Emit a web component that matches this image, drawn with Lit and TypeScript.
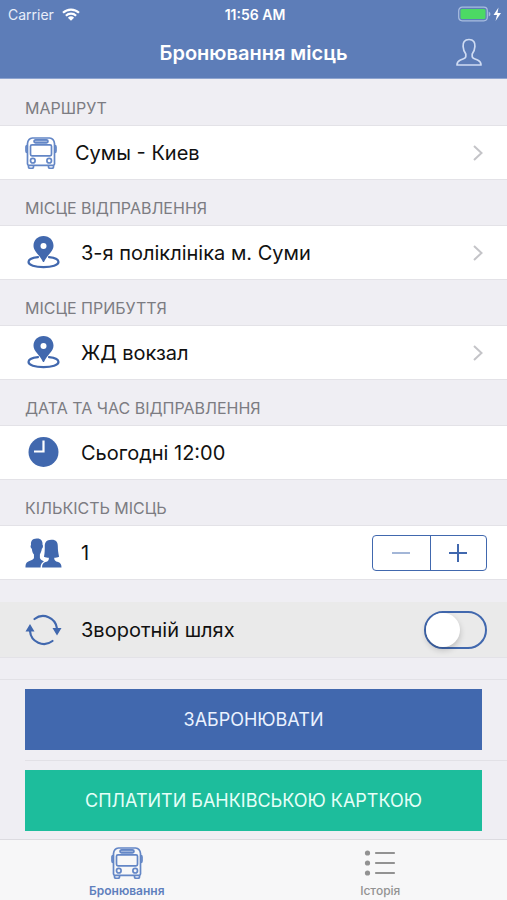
import { LitElement, html, css, svg, nothing } from "lit";
import { customElement, state } from "lit/decorators.js";

const busIcon = svg`
  <svg class="icon bus" viewBox="0 0 32 32" aria-hidden="true" fill="none" stroke="currentColor" stroke-width="1.700">
    <path d="M2.500 27V6.500Q3 1.500 7.500 1H24.500Q29 1.500 29.500 6.500V27Q29.500 28.300 28 28.300H4Q2.500 28.300 2.500 27Z" />
    <rect x="9" y="2.800" width="14" height="3" rx="1.500" fill="currentColor" fill-opacity="0.600" />
    <rect x="5.500" y="7.800" width="21" height="11" rx="1.500" />
    <path d="M2.500 8.500H2Q1 8.500 1 10V14Q1 15.500 2 15.500H2.500M29.500 8.500H30Q31 8.500 31 10V14Q31 15.500 30 15.500H29.500" fill="currentColor" fill-opacity="0.600" />
    <circle cx="7.800" cy="23.700" r="2.300" />
    <circle cx="24.200" cy="23.700" r="2.300" />
    <path d="M3.500 28.500V30Q3.500 31.300 5 31.300H7Q8.500 31.300 8.500 30V28.500M23.500 28.500V30Q23.500 31.300 25 31.300H27Q28.500 31.300 28.500 30V28.500" />
  </svg>`;

const pinIcon = svg`
  <svg class="icon" viewBox="0 0 36 36" aria-hidden="true">
    <path d="M18 1C12 1 8 5.300 8 10.800C8 16.500 14.500 20 17.500 27H18.500C21.500 20 28 16.500 28 10.800C28 5.300 24 1 18 1Z" fill="currentColor" />
    <circle cx="18" cy="11" r="3" fill="#fff" />
    <path d="M12.500 22.200C6.500 22.900 3 24.800 3 27.100C3 30 9.500 32.100 18 32.100S33 30 33 27.100C33 24.800 29.500 22.900 23.500 22.200" fill="none" stroke="currentColor" stroke-width="2.200" stroke-linecap="round" />
  </svg>`;

const clockIcon = svg`
  <svg class="icon" viewBox="0 0 36 36" aria-hidden="true">
    <circle cx="18" cy="17" r="15" fill="currentColor" />
    <path d="M18 5.500V16.500H8.500" fill="none" stroke="#fff" stroke-width="2.200" />
  </svg>`;

const peopleIcon = svg`
  <svg class="icon wide" viewBox="0 0 38 32" aria-hidden="true" fill="currentColor">
    <path d="M27 2.500C32 2.300 33.700 5 33.700 9C33.700 13 34.200 16 35 19.800C33.500 20.600 31.500 20.800 30 20.800C30 23.500 31 24.300 34 25.300C36.500 26.200 37.500 28 37.500 31H17.500C17.500 28 18.500 26.200 21 25.300C24 24.300 24.500 23.500 24.500 20.800C23 20.800 21 20.600 19.500 19.800C20.300 16 20.300 13 20.300 9C20.300 5 22 2.700 27 2.500Z" />
    <path d="M12 1C16.500 .8 18.300 3.500 18 7.500C18.900 8 18.500 11 17.300 11.700C17 14.500 16 16 15.300 17.500V21C15.500 22.800 17 23.300 19.500 24.500C17.200 26 16 28 16 31H.5C.5 27 1.500 25.200 4.500 24.200C7.500 23.200 9 22.700 9.200 21V17.500C8 16.300 7.300 14.500 7 11.700C5.700 11 5.300 8.500 6.200 7.700C5.800 3.500 7.500 1.200 12 1Z" />
  </svg>`;

const returnIcon = svg`
  <svg class="icon" viewBox="0 0 36 36" aria-hidden="true">
    <g fill="none" stroke="currentColor" stroke-width="2.200" stroke-linecap="round">
      <path d="M9 7A14 14 0 0 1 31.500 16.500" />
      <path d="M27 29A14 14 0 0 1 4.500 19" />
    </g>
    <path d="M27 16H36L31.500 23.500ZM0 19.500H9L4.500 12Z" fill="currentColor" />
  </svg>`;

const personIcon = svg`
  <svg class="person" viewBox="0 0 28 30" aria-hidden="true">
    <path d="M15 1.500C10.500 1.500 8.700 4.500 9.100 8.500C9.300 12.500 10.500 14.300 11.800 16V18.500C11.800 20.500 9 20.800 6 22.200C3.500 23.400 3 24.500 3 27H27C27 24.500 26.500 23.400 24 22.200C21 20.800 18.200 20.500 18.200 18.500V16C19.500 14.300 20.700 12.500 20.900 8.500C21.300 4.500 19.500 1.500 15 1.500Z" fill="none" stroke="currentColor" stroke-width="1.700" stroke-linejoin="round" />
  </svg>`;

const wifiIcon = svg`
  <svg class="wifi" viewBox="0 0 18 13" aria-hidden="true">
    <g fill="none" stroke="currentColor" stroke-width="2.200">
      <path d="M1 4.800A11.500 11.500 0 0 1 17 4.800" />
      <path d="M3.900 7.700A7.300 7.300 0 0 1 14.100 7.700" />
    </g>
    <path d="M9 12.800L5.900 9.700A4.500 4.500 0 0 1 12.100 9.700Z" fill="currentColor" />
  </svg>`;

const batteryIcon = svg`
  <svg class="battery" viewBox="0 0 44 16" aria-hidden="true">
    <rect x=".700" y="1.200" width="28.600" height="13.600" rx="3.500" fill="none" stroke="#a9bde0" stroke-width="1.200" />
    <rect x="2.500" y="3" width="25" height="10" rx="1.500" fill="#4cd964" />
    <path d="M30.700 5.500Q32.500 6.500 32.500 8T30.700 10.500Z" fill="#a9bde0" />
    <path d="M40.500 1.500L35.500 9H39L37.500 15L43 7H39.500Z" fill="#fff" />
  </svg>`;

const chevronIcon = svg`
  <svg class="chevron" viewBox="0 0 10 16" aria-hidden="true">
    <path d="M1 1L8.500 8L1 15" fill="none" stroke="currentColor" stroke-width="2" />
  </svg>`;

const listIcon = svg`
  <svg class="icon list" viewBox="0 0 32 32" aria-hidden="true">
    <g fill="currentColor">
      <circle cx="3.500" cy="6" r="2.600" /><circle cx="3.500" cy="16" r="2.600" /><circle cx="3.500" cy="26" r="2.600" />
    </g>
    <path d="M12 6H30M12 16H30M12 26H30" stroke="currentColor" stroke-width="2.200" stroke-linecap="round" />
  </svg>`;

@customElement("app-root")
export class AppRoot extends LitElement {
  @state() private seats = 1;
  @state() private roundTrip = false;

  static styles = css`
    :host {
      --blue: #4168ae;
      display: flex;
      flex-direction: column;
      min-height: 100vh;
      background: #efeef3;
      color: #111;
      font-family: Inter, "Noto Sans", sans-serif;
      font-size: 20px;
    }
    * { box-sizing: border-box; }
    button {
      font: inherit;
      color: inherit;
      border: 0;
      border-radius: 0;
      padding: 0;
      margin: 0;
      background: none;
      cursor: pointer;
    }
    svg { display: block; flex: none; }
    h1, h2 { margin: 0; font-weight: 400; }

    .top { background: #5d7db8; color: #fff; border-bottom: 1px solid #8ea4cf; }
    .status {
      display: grid;
      grid-template-columns: 1fr auto 1fr;
      align-items: center;
      height: 28px;
      padding: 0 5px 0 8px;
      font-size: 14px;
    }
    .carrier { display: flex; align-items: center; gap: 8px; color: #e8eefa; }
    .wifi { width: 18px; height: 13px; color: #fff; }
    .time { font-weight: 600; }
    .battery { width: 44px; height: 16px; justify-self: end; }
    .nav {
      display: grid;
      grid-template-columns: 1fr auto 1fr;
      align-items: center;
      height: 50px;
      padding: 0 25px;
    }
    .title { grid-column: 2; font-size: 20px; font-weight: 600; }
    .profile { justify-self: end; color: #cfdcf3; }
    .person { width: 28px; height: 30px; }

    .label {
      height: 47px;
      padding: 19px 25px 0;
      line-height: 20px;
      font-size: 16px;
      color: #7c7c82;
      border-bottom: 1px solid #e3e2e7;
    }
    .row {
      display: flex;
      align-items: center;
      gap: 19px;
      width: 100%;
      height: 53px;
      padding: 0 20px 0 25px;
      background: #fff;
      box-shadow: 0 1px #e3e2e7;
      text-align: left;
    }
    .row.route { gap: 18px; }
    .value { flex: 1; }
    .icon { width: 37px; height: 36px; color: var(--blue); }
    .icon.bus { width: 32px; height: 32px; color: #6386c6; }
    .chevron { width: 10px; height: 16px; margin-right: 4px; color: #c4c4c8; }

    .stepper {
      display: grid;
      grid-template-columns: 1fr 1fr;
      width: 115px;
      height: 36px;
      border: 1px solid var(--blue);
      border-radius: 4px;
      color: var(--blue);
    }
    .step { display: grid; place-items: center; }
    .step + .step { border-left: 1px solid var(--blue); }
    .step svg { width: 20px; height: 20px; }
    .step:disabled { opacity: 0.6; cursor: default; }

    .row.return {
      height: 55px;
      margin: 23px 0 22px;
      background: #eaeaea;
    }
    .switch {
      appearance: none;
      display: flex;
      width: 63px;
      height: 38px;
      margin: 0;
      border: 2px solid var(--blue);
      border-radius: 19px;
      cursor: pointer;
    }
    .switch::before {
      content: "";
      width: 34px;
      height: 34px;
      border-radius: 50%;
      background: #fff;
      box-shadow: 0 3px 6px #0003;
    }
    .switch:checked { justify-content: flex-end; background: var(--blue); }

    .actions { border-top: 1px solid #e2e1e6; padding: 9px 0 8px; }
    .action {
      display: block;
      width: calc(100% - 50px);
      height: 61px;
      margin: 0 25px;
      font-size: 18px;
      color: #eaf2ff;
      background: #4168ae;
    }
    .action.pay { background: #1dbd9c; color: #e6fff8; }
    .divider { height: 1px; margin: 10px 0 9px 25px; background: #e2e1e6; }

    .tabs {
      display: grid;
      grid-template-columns: 1fr 1fr;
      margin-top: auto;
      height: 61px;
      border-top: 1px solid #dcdbe0;
      background: #f7f7f8;
    }
    .tab {
      display: flex;
      flex-direction: column;
      align-items: center;
      gap: 4px;
      padding-top: 7px;
      font-size: 12px;
      line-height: 16px;
      font-weight: 500;
      text-decoration: none;
      color: #929292;
    }
    .tab.active { color: #5f80bd; font-weight: 600; }
    .icon.list { width: 32px; height: 32px; color: inherit; }
  `;

  private field(label: string, value: string, icon: unknown, kind = "", chevron = true) {
    return html`
      <section>
        <h2 class="label">${label}</h2>
        <button class="row ${kind}" type="button" aria-label="${label}: ${value}">
          ${icon}<span class="value">${value}</span>${chevron ? chevronIcon : nothing}
        </button>
      </section>`;
  }

  render() {
    return html`
      <header class="top">
        <div class="status">
          <span class="carrier">Carrier ${wifiIcon}</span>
          <span class="time">11:56 AM</span>
          ${batteryIcon}
        </div>
        <div class="nav">
          <h1 class="title">Бронювання місць</h1>
          <button class="profile" type="button" aria-label="Профіль">${personIcon}</button>
        </div>
      </header>
      <main>
        ${this.field("МАРШРУТ", "Сумы - Киев", busIcon, "route")}
        ${this.field("МІСЦЕ ВІДПРАВЛЕННЯ", "3-я поліклініка м. Суми", pinIcon)}
        ${this.field("МІСЦЕ ПРИБУТТЯ", "ЖД вокзал", pinIcon)}
        ${this.field("ДАТА ТА ЧАС ВІДПРАВЛЕННЯ", "Сьогодні 12:00", clockIcon, "", false)}
        <section>
          <h2 class="label" id="seats">КІЛЬКІСТЬ МІСЦЬ</h2>
          <div class="row">
            ${peopleIcon}
            <output class="value" aria-labelledby="seats">${this.seats}</output>
            <div class="stepper" role="group" aria-labelledby="seats">
              <button class="step" type="button" aria-label="Менше" ?disabled=${this.seats <= 1} @click=${() => this.seats--}>
                <svg viewBox="0 0 20 20"><path d="M1 10H19" stroke="currentColor" stroke-width="1.600" /></svg>
              </button>
              <button class="step" type="button" aria-label="Більше" @click=${() => this.seats++}>
                <svg viewBox="0 0 20 20"><path d="M1 10H19M10 1V19" stroke="currentColor" stroke-width="2" /></svg>
              </button>
            </div>
          </div>
        </section>
        <div class="row return">
          ${returnIcon}
          <label class="value" for="return">Зворотній шлях</label>
          <input class="switch" id="return" type="checkbox" role="switch" .checked=${this.roundTrip}
            @change=${(e: Event) => (this.roundTrip = (e.target as HTMLInputElement).checked)} />
        </div>
        <div class="actions">
          <button class="action" type="button">ЗАБРОНЮВАТИ</button>
          <div class="divider"></div>
          <button class="action pay" type="button">СПЛАТИТИ БАНКІВСЬКОЮ КАРТКОЮ</button>
        </div>
      </main>
      <nav class="tabs">
        <a class="tab active" href="#booking" aria-current="page">${busIcon}Бронювання</a>
        <a class="tab" href="#history">${listIcon}Історія</a>
      </nav>`;
  }
}
